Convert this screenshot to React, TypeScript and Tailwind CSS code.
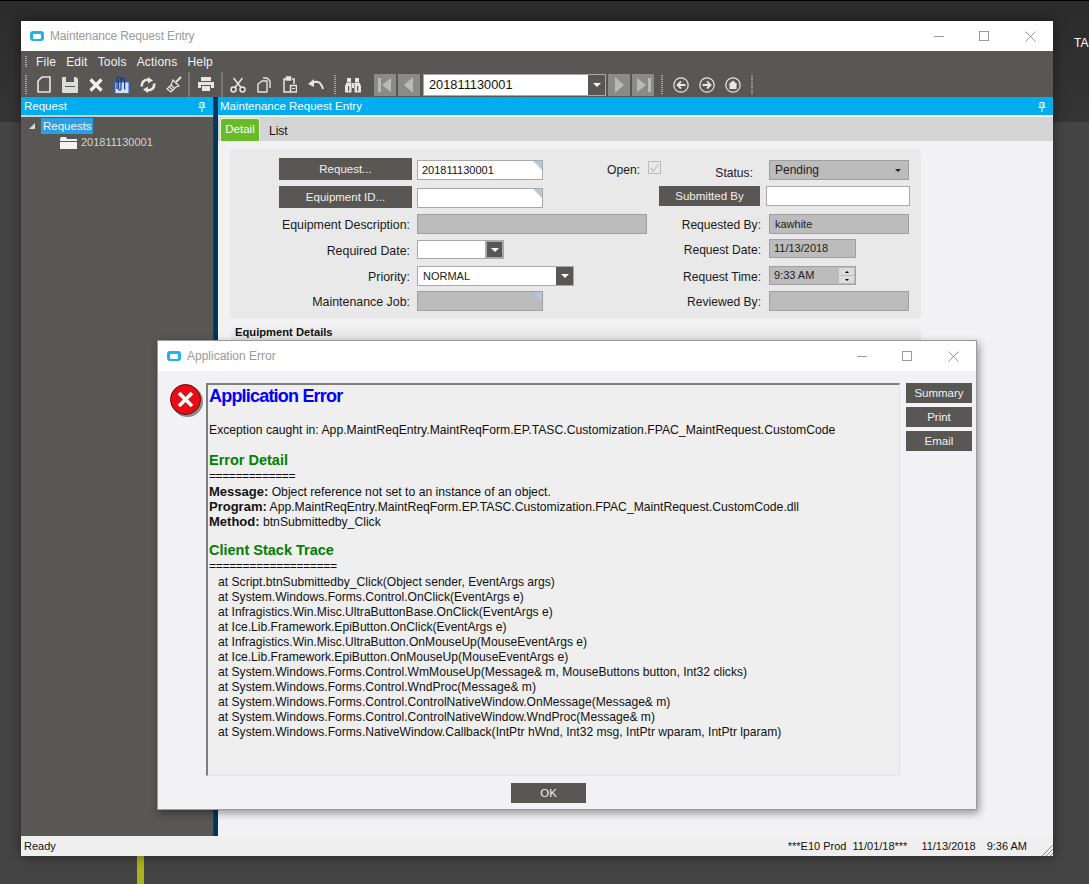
import React from "react";

const FONT = { fontFamily: '"Liberation Sans", Arial, sans-serif' };

function Grip({ h = 18 }: { h?: number }) {
  return (
    <div
      className="w-[2px] shrink-0 bg-[repeating-linear-gradient(to_bottom,#a9a8a5_0px,#a9a8a5_1px,transparent_1px,transparent_2px)]"
      style={{ height: h }}
    />
  );
}

function TB({ children, w = "w-[26px]" }: { children: React.ReactNode; w?: string }) {
  return <div className={`${w} h-[25px] shrink-0 flex items-center justify-center`}>{children}</div>;
}

const C = "#e6e6e4";

const Icons = {
  page: (
    <svg width="14" height="17" viewBox="0 0 14 17" fill="none" stroke={C} strokeWidth="1.6">
      <path d="M5 1h8v15H1V5z" strokeLinejoin="round" />
    </svg>
  ),
  save: (
    <svg width="16" height="16" viewBox="0 0 16 16">
      <path d="M1 0h13l2 2v13a1 1 0 0 1-1 1H1a1 1 0 0 1-1-1V1a1 1 0 0 1 1-1z" fill="#dcdcda" />
      <rect x="4" y="0" width="8" height="5" fill="#595753" />
      <rect x="3" y="9" width="10" height="1" fill="#595753" />
    </svg>
  ),
  x: (
    <svg width="14" height="14" viewBox="0 0 14 14" stroke="#f2f2f2" strokeWidth="3.2">
      <path d="M1.500 1.500l11 11M12.500 1.500l-11 11" />
    </svg>
  ),
  attach: (
    <svg width="16" height="18" viewBox="0 0 16 18">
      <rect x="1" y="6" width="14" height="11.500" fill="#cfe1f6" stroke="#1b6fe0" strokeWidth="1" />
      <path d="M3 13V3a2 2 0 0 1 4 0v10a1.200 1.200 0 0 1-2.400 0V5" fill="none" stroke="#123a96" strokeWidth="1.200" />
      <path d="M7 4a1.800 1.800 0 0 1 3.600 0v9.500" fill="none" stroke="#123a96" strokeWidth="1.200" />
    </svg>
  ),
  refresh: (
    <svg width="16" height="16" viewBox="0 0 16 16" fill="none">
      <path d="M2 9.500C1 5 5 2 9 3" stroke={C} strokeWidth="2.600" />
      <path d="M14 6.500C15 11 11 14 7 13" stroke={C} strokeWidth="2.600" />
      <path d="M8 0l5 3.500-5 3z" fill={C} />
      <path d="M8 16l-5-3.500 5-3z" fill={C} />
    </svg>
  ),
  brush: (
    <svg width="17" height="17" viewBox="0 0 17 17" fill="none" stroke={C} strokeWidth="1.200">
      <path d="M10 6l5-5" strokeWidth="2" />
      <path d="M7 4l6 6-3 1-5 5-4-3 4-4z" />
      <path d="M5 9l3 3M3.500 11l3 3" />
    </svg>
  ),
  printer: (
    <svg width="16" height="15" viewBox="0 0 16 15">
      <rect x="3" y="0" width="10" height="4" fill={C} />
      <path d="M0 5h16v6h-3V8H3v3H0z" fill={C} />
      <rect x="4" y="9" width="8" height="5" fill={C} />
    </svg>
  ),
  scissors: (
    <svg width="16" height="16" viewBox="0 0 16 16" fill="none" stroke={C} strokeWidth="1.500">
      <circle cx="3.500" cy="12.500" r="2.500" />
      <circle cx="12.500" cy="12.500" r="2.500" />
      <path d="M5 10.500L12.500 1M11 10.500L3.500 1" />
    </svg>
  ),
  copy: (
    <svg width="14" height="16" viewBox="0 0 14 16" fill="none" stroke={C} strokeWidth="1.400">
      <path d="M6 1h4l3 3v7" />
      <path d="M1 7l4-3h5v11H1z" strokeLinejoin="round" />
    </svg>
  ),
  paste: (
    <svg width="14" height="17" viewBox="0 0 14 17" fill="none" stroke={C} strokeWidth="1.500">
      <path d="M3 3H1v13h6" />
      <path d="M9 3h2v5" />
      <rect x="3.500" y="1" width="4" height="3" fill={C} />
      <rect x="7.500" y="9.500" width="6" height="6.500" />
      <path d="M9 12.500h3" strokeWidth="1" />
    </svg>
  ),
  undo: (
    <svg width="16" height="11" viewBox="0 0 16 11" fill="none">
      <path d="M5 4c4-2.500 8-1 10 6" stroke={C} strokeWidth="2" />
      <path d="M0 5l6-5v8z" fill={C} />
    </svg>
  ),
  binoculars: (
    <svg width="16" height="16" viewBox="0 0 16 16">
      <rect x="2" y="1" width="4" height="4" fill={C} />
      <rect x="10" y="1" width="4" height="4" fill={C} />
      <path d="M1.500 5.500h5v10H0V9zM9.500 5.500h5L16 9v6.500H9.500z" fill={C} />
      <rect x="7" y="6" width="2" height="5" fill={C} />
      <rect x="3" y="9" width="1.200" height="5" fill="#595753" />
      <rect x="12" y="9" width="1.200" height="5" fill="#595753" />
    </svg>
  ),
};

function NavBtn({ kind }: { kind: "first" | "prev" | "next" | "last" }) {
  const paths = {
    first: "M3 2h3v14H3zM16 2v14l-9-7z",
    prev: "M14 1v16L5 9z",
    next: "M6 1v16l9-8z",
    last: "M15 2h3v14h-3zM4 2v14l9-7z",
  };
  return (
    <div className="w-[22px] h-[22px] shrink-0 bg-[#8a8a88] flex items-center justify-center">
      <svg width="20" height="18" viewBox="0 0 20 18">
        <path d={paths[kind]} fill="#b9b9b7" />
      </svg>
    </div>
  );
}

function Round({ kind }: { kind: "back" | "fwd" | "home" }) {
  return (
    <svg width="16" height="16" viewBox="0 0 16 16" fill="none" stroke={C}>
      <circle cx="8" cy="8" r="7.200" strokeWidth="1.200" />
      {kind === "back" && <path d="M12.500 8H5M8 4.500L4.500 8 8 11.500" strokeWidth="1.800" />}
      {kind === "fwd" && <path d="M3.500 8H11M8 4.500L11.500 8 8 11.500" strokeWidth="1.800" />}
      {kind === "home" && <path d="M8 3.500l4.500 4H11.500V12h-7V7.500H3.500z" fill={C} stroke="none" />}
    </svg>
  );
}

function WinControls() {
  return (
    <div className="flex items-center">
      <div className="w-[10px] h-[1px] bg-[#9a9a9a]" />
      <div className="ml-[35px] w-[10px] h-[10px] border border-[#9a9a9a]" />
      <svg className="ml-[36px]" width="11" height="11" viewBox="0 0 11 11" stroke="#9a9a9a" strokeWidth="1">
        <path d="M.5.500l10 10M10.500.500l-10 10" />
      </svg>
    </div>
  );
}

function AppIcon() {
  return (
    <div className="w-[14px] h-[10px] rounded-[3px] bg-[#1fb4e8] flex items-center justify-center shrink-0">
      <div className="w-[8px] h-[5px] rounded-[1px] bg-white" />
    </div>
  );
}

function Corner() {
  return (
    <div className="absolute top-0 right-0 w-0 h-0 border-t-[9px] border-l-[9px] border-t-[#b4c7df] border-l-transparent" />
  );
}

function Label({ w, children, t = "mt-[5px]", s = "text-[12.4px]" }: { w: string; children: React.ReactNode; t?: string; s?: string }) {
  return <div className={`${w} ${t} ${s} shrink-0 text-right leading-[15px] text-[#1a1a1a]`}>{children}</div>;
}

function DarkBtn({ cls, children }: { cls: string; children: React.ReactNode }) {
  return (
    <div className={`${cls} shrink-0 bg-[#595753] text-[#f0f0f0] text-[11.5px] pt-[1px] flex items-center justify-center`}>
      {children}
    </div>
  );
}

function Drop({ w = "w-[18px]" }: { w?: string }) {
  return (
    <div className={`${w} h-full bg-[#595753] flex items-center justify-center shrink-0`}>
      <div className="w-0 h-0 border-t-[4px] border-x-[4px] border-t-white border-x-transparent" />
    </div>
  );
}

const WHITE = "bg-white border border-[#a9a9a9]";
const GREY = "bg-[#bcbcbc] border border-[#a0a0a0]";
const RS = "text-[12.1px]";

const stack = [
  "   at Script.btnSubmittedby_Click(Object sender, EventArgs args)",
  "   at System.Windows.Forms.Control.OnClick(EventArgs e)",
  "   at Infragistics.Win.Misc.UltraButtonBase.OnClick(EventArgs e)",
  "   at Ice.Lib.Framework.EpiButton.OnClick(EventArgs e)",
  "   at Infragistics.Win.Misc.UltraButton.OnMouseUp(MouseEventArgs e)",
  "   at Ice.Lib.Framework.EpiButton.OnMouseUp(MouseEventArgs e)",
  "   at System.Windows.Forms.Control.WmMouseUp(Message& m, MouseButtons button, Int32 clicks)",
  "   at System.Windows.Forms.Control.WndProc(Message& m)",
  "   at System.Windows.Forms.Control.ControlNativeWindow.OnMessage(Message& m)",
  "   at System.Windows.Forms.Control.ControlNativeWindow.WndProc(Message& m)",
  "   at System.Windows.Forms.NativeWindow.Callback(IntPtr hWnd, Int32 msg, IntPtr wparam, IntPtr lparam)",
];

function Form() {
  return (
    <div className="mx-[12px] mt-[8px] h-[170px] w-[691px] rounded-[4px] bg-[#e9e9e9] pt-[9px]">
      {/* row 1 */}
      <div className="flex h-[28px]">
        <DarkBtn cls="ml-[49px] w-[133px] h-[22px]">Request...</DarkBtn>
        <div className={`${WHITE} relative ml-[5px] mt-[2px] w-[126px] h-[20px] text-[11px] leading-[19px] pl-[4px] text-[#111]`}>
          201811130001
          <Corner />
        </div>
        <Label w="w-[97px]" t="mt-[5px]" s={RS}>Open:</Label>
        <div className="ml-[8px] mt-[3px] w-[13px] h-[13px] border border-[#bdbdbd] flex items-center justify-center">
          <svg width="11" height="11" viewBox="0 0 11 11" fill="none" stroke="#c2c2c2" strokeWidth="1.200">
            <path d="M1.500 6l3 3 5-7" />
          </svg>
        </div>
        <Label w="w-[92px]" t="mt-[8px]" s={RS}>Status:</Label>
        <div className={`${GREY} ml-[16px] mt-[2px] w-[140px] h-[20px] flex items-center pl-[5px] pr-[7px] justify-between text-[12px] text-[#222]`}>
          Pending
          <div className="w-0 h-0 border-t-[3px] border-x-[3px] border-t-[#222] border-x-transparent" />
        </div>
      </div>
      {/* row 2 */}
      <div className="flex h-[28px]">
        <DarkBtn cls="ml-[49px] w-[133px] h-[22px]">Equipment ID...</DarkBtn>
        <div className={`${WHITE} relative ml-[5px] mt-[2px] w-[126px] h-[20px]`}>
          <Corner />
        </div>
        <DarkBtn cls="ml-[116px] w-[101px] h-[20px]">Submitted By</DarkBtn>
        <div className={`${WHITE} ml-[6px] w-[144px] h-[20px]`} />
      </div>
      {/* row 3 */}
      <div className="flex h-[26px]">
        <Label w="w-[180px]" t="mt-[4px]">Equipment Description:</Label>
        <div className={`${GREY} ml-[7px] w-[230px] h-[20px]`} />
        <Label w="w-[114px]" t="mt-[4px]" s={RS}>Requested By:</Label>
        <div className={`${GREY} ml-[8px] w-[140px] h-[20px] text-[11px] leading-[18px] pl-[5px] text-[#222]`}>kawhite</div>
      </div>
      {/* row 4 */}
      <div className="flex h-[26px]">
        <Label w="w-[180px]" t="mt-[4px]">Required Date:</Label>
        <div className={`${WHITE} ml-[7px] w-[87px] h-[19px] flex justify-end`}>
          <div className="border-2 border-[#a9a9a9] h-[19px] -mt-[1px] -mr-[1px] flex">
            <Drop w="w-[15px]" />
          </div>
        </div>
        <Label w="w-[257px]" t="mt-[3px]" s={RS}>Request Date:</Label>
        <div className={`${GREY} ml-[8px] -mt-[1px] w-[87px] h-[19px] text-[11px] leading-[17px] pl-[4px] text-[#222]`}>11/13/2018</div>
      </div>
      {/* row 5 */}
      <div className="flex h-[25px]">
        <Label w="w-[180px]" t="mt-[4px]">Priority:</Label>
        <div className={`${WHITE} ml-[7px] w-[157px] h-[20px] flex justify-between text-[11px] leading-[18px] pl-[5px] text-[#222]`}>
          NORMAL
          <div className="border-[1px] border-[#a9a9a9] border-l-0 -m-[1px] flex"><Drop w="w-[17px]" /></div>
        </div>
        <Label w="w-[187px]" t="mt-[4px]" s={RS}>Request Time:</Label>
        <div className={`${GREY} ml-[8px] w-[87px] h-[19px] flex justify-between text-[11px] leading-[17px] pl-[4px] text-[#222]`}>
          9:33 AM
          <div className="w-[17px] flex flex-col gap-[1px] p-[1px] pb-0">
            <div className="h-[7px] bg-[#dcdcdc] flex items-center justify-center">
              <div className="w-0 h-0 border-b-[2px] border-x-[2px] border-b-black border-x-transparent" />
            </div>
            <div className="h-[7px] bg-[#dcdcdc] flex items-center justify-center">
              <div className="w-0 h-0 border-t-[2px] border-x-[2px] border-t-black border-x-transparent" />
            </div>
          </div>
        </div>
      </div>
      {/* row 6 */}
      <div className="flex h-[25px]">
        <Label w="w-[180px]" t="mt-[4px]">Maintenance Job:</Label>
        <div className={`${GREY} relative ml-[7px] w-[126px] h-[20px]`}>
          <Corner />
        </div>
        <Label w="w-[218px]" t="mt-[4px]" s={RS}>Reviewed By:</Label>
        <div className={`${GREY} ml-[8px] w-[140px] h-[20px]`} />
      </div>
    </div>
  );
}

function Pin() {
  return (
    <svg width="8" height="10" viewBox="0 0 8 10" fill="none" stroke="#fff" strokeWidth="1">
      <path d="M2 .5h4v5H2zM.5 5.500h7M4 6v4" />
      <path d="M5 1v4" />
    </svg>
  );
}

function MainWindow() {
  return (
    <div className="absolute left-[21px] top-[21px] w-[1032px] h-[835px] flex flex-col shadow-[0_0_12px_rgba(0,0,0,0.45)]">
      <div className="h-[30px] bg-white flex items-center pl-[9px] shrink-0">
        <AppIcon />
        <span className="ml-[6px] text-[#9a9a9a] text-[12px] tracking-[-0.15px]">Maintenance Request Entry</span>
        <div className="ml-auto mr-[17px]">
          <WinControls />
        </div>
      </div>
      <div className="h-[46px] shrink-0 bg-[#595753] flex flex-col">
        <div className="h-[21px] flex items-center pl-[4px] text-[#f2f2f2] text-[12px] tracking-[0.2px]">
          <Grip h={12} />
          <div className="ml-[9px] flex gap-[10px]">
            <span>File</span>
            <span>Edit</span>
            <span>Tools</span>
            <span>Actions</span>
            <span>Help</span>
          </div>
        </div>
        <div className="h-[25px] flex items-center pl-[4px]">
          <Grip h={20} />
          <div className="w-[4px] shrink-0" />
          <TB>{Icons.page}</TB>
          <TB>{Icons.save}</TB>
          <TB>{Icons.x}</TB>
          <TB>{Icons.attach}</TB>
          <TB>{Icons.refresh}</TB>
          <TB>{Icons.brush}</TB>
          <div className="w-[2px] h-[25px] bg-[#787673] ml-[1px] shrink-0" />
          <TB w="w-[31px]">{Icons.printer}</TB>
          <div className="w-[2px] h-[25px] bg-[#787673] shrink-0" />
          <TB w="w-[30px]">{Icons.scissors}</TB>
          <TB w="w-[22px]">{Icons.copy}</TB>
          <TB w="w-[30px]">{Icons.paste}</TB>
          <TB w="w-[22px]">{Icons.undo}</TB>
          <div className="ml-[7px]"><Grip h={20} /></div>
          <TB w="w-[34px]">{Icons.binoculars}</TB>
          <div className="ml-[4px] flex items-center gap-[2px]">
            <NavBtn kind="first" />
            <NavBtn kind="prev" />
            <div className="ml-[1px] w-[183px] h-[22px] border border-[#a9a9a9] bg-white flex justify-between pl-[5px] text-[12.8px] leading-[20px] text-[#111] shrink-0">
              201811130001
              <Drop w="w-[17px]" />
            </div>
            <NavBtn kind="next" />
            <NavBtn kind="last" />
          </div>
          <div className="ml-[7px]"><Grip h={20} /></div>
          <TB w="w-[36px]"><Round kind="back" /></TB>
          <TB w="w-[16px]"><Round kind="fwd" /></TB>
          <TB w="w-[36px]"><Round kind="home" /></TB>
          <Grip h={20} />
        </div>
      </div>
      <div className="flex flex-1 min-h-0">
        <div className="w-[192px] shrink-0 bg-[#595753] flex flex-col">
          <div className="h-[18px] bg-[#00adef] flex items-center justify-between pl-[3px] pr-[7px] pt-[1px] text-white text-[11.5px] shrink-0">
            Request
            <Pin />
          </div>
          <div className="h-[2px] mb-[1px] bg-[#cfcfcd] shrink-0" />
          <div className="flex items-center h-[16px] pl-[8px]">
            <div className="w-0 h-0 border-b-[6px] border-l-[6px] border-b-[#d8d8d8] border-l-transparent" />
            <div className="ml-[6px] w-[52px] h-[16px] bg-[#2a9fe3] text-[#f5f5f5] text-[11.5px] leading-[16px] pl-[2px]">Requests</div>
          </div>
          <div className="flex items-center h-[17px] pl-[39px]">
            <svg width="17" height="12" viewBox="0 0 17 12">
              <path d="M0 2l1-2h5l1 2h10v2H0zM0 5h17v7H0z" fill="#f2f2f2" />
            </svg>
            <span className="ml-[4px] text-[#d4d4d4] text-[11px]">201811130001</span>
          </div>
        </div>
        <div className="w-[5px] shrink-0 bg-[#00365a] border-l border-[#3a3a3a]" />
        <div className="flex-1 min-w-0 flex flex-col bg-[#f2f2f4]">
          <div className="h-[18px] bg-[#00adef] flex items-center justify-between pl-[2px] pr-[7px] pt-[1px] text-white text-[11.5px] shrink-0">
            Maintenance Request Entry
            <Pin />
          </div>
          <div className="h-[2px] bg-white shrink-0" />
          <div className="h-[24px] bg-[#d4d4d4] shrink-0 flex items-end pl-[2px]">
            <div className="w-[40px] h-[23px] bg-[#66bb26] border border-[#e8f3df] border-b-0 rounded-t-[3px] text-white text-[11.5px] flex items-center justify-center">
              Detail
            </div>
            <div className="ml-[9px] h-[21px] text-[12px] text-[#111] leading-[22px]">List</div>
          </div>
          <Form />
          <div className="mx-[13px] mt-[6px] w-[690px] h-[16px] rounded-t-[4px] bg-gradient-to-b from-[#f0f0f0] to-[#e2e2e2] pl-[4px] text-[11.2px] leading-[14px] font-bold text-[#111]">
            Equipment Details
          </div>
        </div>
      </div>
      <div className="h-[20px] shrink-0 bg-[#efefef] flex items-center pl-[3px] pt-[1px] text-[11px] text-[#111] relative">
        Ready
        <div className="ml-auto mr-[26px] flex whitespace-pre">
          <span>***E10 Prod  11/01/18***</span>
          <span className="ml-[14px]">11/13/2018</span>
          <span className="ml-[11px]">9:36 AM</span>
        </div>
        <svg className="absolute right-0 bottom-0" width="11" height="11" viewBox="0 0 11 11" stroke="#8a8a8a" strokeWidth="1">
          <path d="M0 11L11 0M4 11l7-7M8 11l3-3" />
        </svg>
      </div>
    </div>
  );
}

function Dialog() {
  return (
    <div className="absolute left-[157px] top-[340px] w-[820px] h-[470px] border border-[#9b9b9b] bg-[#f2f2f4] flex flex-col shadow-[2px_3px_8px_rgba(0,0,0,0.4)]">
      <div className="h-[30px] bg-white flex items-center pl-[9px] shrink-0">
        <AppIcon />
        <span className="ml-[6px] text-[#9a9a9a] text-[12px]">Application Error</span>
        <div className="ml-auto mr-[17px]">
          <WinControls />
        </div>
      </div>
      <div className="flex flex-1 min-h-0 pt-[12px]">
        <div className="w-[48px] shrink-0 pl-[12px] pt-[1px]">
          <div className="w-[31px] h-[31px] rounded-full bg-[#ee0a14] border border-[#5a0a0a] shadow-[2px_2px_0_#8a8a8a] flex items-center justify-center">
            <svg width="17" height="17" viewBox="0 0 17 17" stroke="#fff" strokeWidth="3.600">
              <path d="M2 2l13 13M15 2L2 15" />
            </svg>
          </div>
        </div>
        <div className="w-[694px] h-[393px] shrink-0 border-t-2 border-l-2 border-[#7f7f7f] border-r border-b border-r-[#e4e4e4] border-b-[#e4e4e4] bg-[#efefef] pl-[1px] text-[12.2px] leading-[15px] text-[#111] whitespace-pre">
          <div className="text-[#0000ff] text-[18px] leading-[22px] font-bold tracking-[-0.8px]">Application Error</div>
          <div className="mt-[16px]">Exception caught in: App.MaintReqEntry.MaintReqForm.EP.TASC.Customization.FPAC_MaintRequest.CustomCode</div>
          <div className="mt-[14px] text-[#008000] text-[14.5px] leading-[17px] font-bold">Error Detail</div>
          <div className="tracking-[-0.5px]">=============</div>
          <div className="h-[15px]"><b className="text-[13px] leading-[15px]">Message:</b> Object reference not set to an instance of an object.</div>
          <div className="h-[15px]"><b className="text-[13px] leading-[15px]">Program:</b> App.MaintReqEntry.MaintReqForm.EP.TASC.Customization.FPAC_MaintRequest.CustomCode.dll</div>
          <div className="h-[15px]"><b className="text-[13px] leading-[15px]">Method:</b> btnSubmittedby_Click</div>
          <div className="mt-[13px] text-[#008000] text-[14.5px] leading-[17px] font-bold">Client Stack Trace</div>
          <div className="tracking-[-0.4px]">===================</div>
          <div className="mt-[1px] -ml-[1px] text-[12.1px]">
            {stack.map((s) => (
              <div key={s}>{s}</div>
            ))}
          </div>
        </div>
        <div className="ml-[6px] flex flex-col gap-[4px]">
          <DarkBtn cls="w-[66px] h-[20px]">Summary</DarkBtn>
          <DarkBtn cls="w-[66px] h-[20px]">Print</DarkBtn>
          <DarkBtn cls="w-[66px] h-[20px]">Email</DarkBtn>
        </div>
      </div>
      <div className="h-[33px] shrink-0 flex justify-center pr-[37px] pt-[7px]">
        <DarkBtn cls="w-[75px] h-[20px]">OK</DarkBtn>
      </div>
    </div>
  );
}

export default function App() {
  return (
    <div className="relative w-[1089px] h-[884px] overflow-hidden bg-[#444444]" style={FONT}>
      <div className="h-[122px] bg-gradient-to-b from-[#2b2b2b] to-[#353535] border-t border-black" />
      <div className="absolute left-[1074px] top-[34px] text-white text-[12px]">TASC</div>
      <div className="absolute left-[137px] top-[856px] w-[7px] h-[28px] bg-[#a8b51d]" />
      <MainWindow />
      <Dialog />
    </div>
  );
}
